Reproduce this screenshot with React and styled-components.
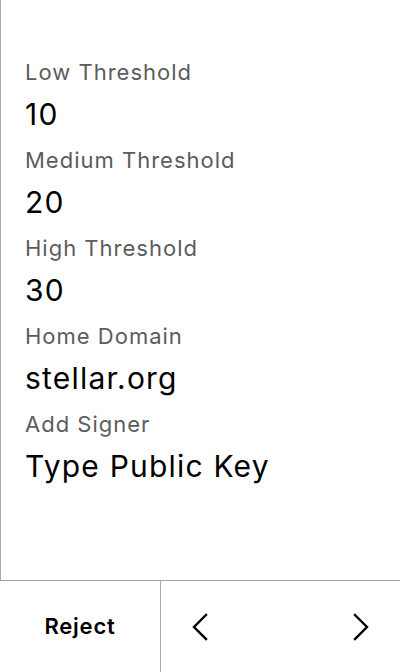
import React from "react";
import styled, { createGlobalStyle } from "styled-components";

const GlobalStyle = createGlobalStyle`
  html, body {
    margin: 0;
    padding: 0;
    background: #fff;
  }
  body {
    font-family: Inter, "Noto Sans", sans-serif;
    color: #000;
  }
`;

const fields = [
  { label: "Low Threshold", value: "10" },
  { label: "Medium Threshold", value: "20" },
  { label: "High Threshold", value: "30" },
  { label: "Home Domain", value: "stellar.org" },
  { label: "Add Signer", value: "Type Public Key" },
];

const Chevron = ({ dir }) => (
  <svg width="16" height="28" viewBox="0 0 16 28" fill="none">
    <polyline
      points={dir === "left" ? "14,2 2,14 14,26" : "2,2 14,14 2,26"}
      stroke="#000"
      strokeWidth="2.4"
      strokeLinecap="square"
      strokeLinejoin="miter"
    />
  </svg>
);

const App = () => {
  return (
    <>
      <GlobalStyle />
      <StyledScreen>
        <StyledContent>
          {fields.map((f) => (
            <StyledField key={f.label}>
              <Label>{f.label}</Label>
              <Value>{f.value}</Value>
            </StyledField>
          ))}
        </StyledContent>
        <StyledFooter>
          <RejectButton>Reject</RejectButton>
          <NavGroup>
            <NavButton aria-label="Previous">
              <Chevron dir="left" />
            </NavButton>
            <NavButton aria-label="Next">
              <Chevron dir="right" />
            </NavButton>
          </NavGroup>
        </StyledFooter>
      </StyledScreen>
    </>
  );
};

const StyledScreen = styled.div`
  width: 400px;
  height: 672px;
  display: flex;
  flex-direction: column;
  overflow: hidden;
`;
const StyledContent = styled.div`
  flex: 1;
  border-left: 1px solid #a8a8a8;
  padding: 58px 0 0 24px;
`;
const StyledField = styled.div`
  display: flex;
  flex-direction: column;
  margin-bottom: 14px;
`;
const Label = styled.div`
  font-size: 22px;
  line-height: 28px;
  letter-spacing: 1px;
  color: #5c5c5c;
`;
const Value = styled.div`
  margin-top: 10px;
  font-size: 30px;
  line-height: 36px;
  letter-spacing: 1.2px;
  color: #000;
`;
const StyledFooter = styled.div`
  height: 91px;
  border-top: 1px solid #a8a8a8;
  display: grid;
  grid-template-columns: 161px 1fr;
`;
const RejectButton = styled.div`
  display: flex;
  align-items: center;
  justify-content: center;
  border-right: 1px solid #a8a8a8;
  font-size: 22px;
  font-weight: 600;
  letter-spacing: 0.8px;
  padding-bottom: 2px;
`;
const NavGroup = styled.div`
  display: flex;
  align-items: center;
  justify-content: space-between;
  padding: 0 31px 0 31px;
`;
const NavButton = styled.div`
  display: flex;
  align-items: center;
  justify-content: center;
`;

export default App;
